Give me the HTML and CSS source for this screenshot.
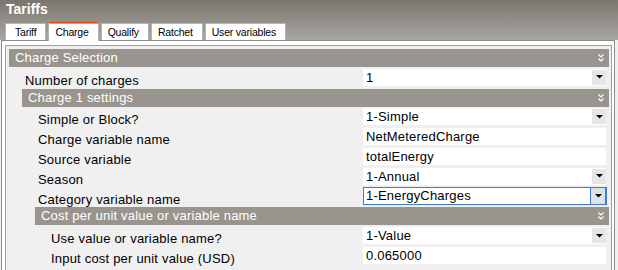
FILE: index.html
```html
<!DOCTYPE html>
<html lang="en">
<head>
  <meta charset="UTF-8">
  <title>Tariffs</title>
  <link rel="stylesheet" href="styles.css">
</head>
<body>
  <div class="window">
    <div class="title">Tariffs</div>

    <div class="tabs">
      <div class="tab">Tariff</div>
      <div class="tab active">Charge</div>
      <div class="tab">Qualify</div>
      <div class="tab">Ratchet</div>
      <div class="tab">User variables</div>
    </div>

    <div class="page">
      <div class="grid">
        <div class="row">
          <div class="head lv0"><span>Charge Selection</span><svg class="chev" width="6" height="8" viewBox="0 0 6 8"><path d="M0.5 0.5 L3 3 L5.5 0.5 M0.5 4.5 L3 7 L5.5 4.5"/></svg></div>
        </div>
        <div class="row">
          <div class="label lv0">Number of charges</div>
          <div class="value"><span class="text">1</span><span class="drop"><svg width="7" height="4" viewBox="0 0 7 4"><polygon points="0,0 7,0 3.5,3.5"/></svg></span></div>
        </div>
        <div class="row">
          <div class="head lv1"><span>Charge 1 settings</span><svg class="chev" width="6" height="8" viewBox="0 0 6 8"><path d="M0.5 0.5 L3 3 L5.5 0.5 M0.5 4.5 L3 7 L5.5 4.5"/></svg></div>
        </div>
        <div class="row">
          <div class="label lv1">Simple or Block?</div>
          <div class="value"><span class="text">1-Simple</span><span class="drop"><svg width="7" height="4" viewBox="0 0 7 4"><polygon points="0,0 7,0 3.5,3.5"/></svg></span></div>
        </div>
        <div class="row">
          <div class="label lv1">Charge variable name</div>
          <div class="value"><span class="text">NetMeteredCharge</span></div>
        </div>
        <div class="row">
          <div class="label lv1">Source variable</div>
          <div class="value"><span class="text">totalEnergy</span></div>
        </div>
        <div class="row">
          <div class="label lv1">Season</div>
          <div class="value"><span class="text">1-Annual</span><span class="drop"><svg width="7" height="4" viewBox="0 0 7 4"><polygon points="0,0 7,0 3.5,3.5"/></svg></span></div>
        </div>
        <div class="row">
          <div class="label lv1">Category variable name</div>
          <div class="value focus"><span class="text">1-EnergyCharges</span><span class="drop"><svg width="7" height="4" viewBox="0 0 7 4"><polygon points="0,0 7,0 3.5,3.5"/></svg></span></div>
        </div>
        <div class="row">
          <div class="head lv2"><span>Cost per unit value or variable name</span><svg class="chev" width="6" height="8" viewBox="0 0 6 8"><path d="M0.5 0.5 L3 3 L5.5 0.5 M0.5 4.5 L3 7 L5.5 4.5"/></svg></div>
        </div>
        <div class="row">
          <div class="label lv2">Use value or variable name?</div>
          <div class="value"><span class="text">1-Value</span><span class="drop"><svg width="7" height="4" viewBox="0 0 7 4"><polygon points="0,0 7,0 3.5,3.5"/></svg></span></div>
        </div>
        <div class="row">
          <div class="label lv2">Input cost per unit value (USD)</div>
          <div class="value"><span class="text">0.065000</span></div>
        </div>
      </div>
    </div>
  </div>
</body>
</html>
```

FILE: styles.css
```css
/* tariff editor window */
body {
  margin: 0;
  font-family: "Liberation Sans", Arial, sans-serif;
  font-size: 13px;
  color: #000;
  background-color: #f0f0f0;
}

.window {
  width: 618px;
  height: 270px;
  overflow: hidden;
  background: linear-gradient(to bottom, #7a756d 0, #a8a6a2 40px, #f0f0f0 40px);
}

.title {
  box-sizing: border-box;
  height: 22px;
  padding: 1px 0 0 6px;
  line-height: 17px;
  font-size: 14px;
  font-weight: bold;
  color: #fff;
}

/* tabs */
.tabs {
  position: relative;
  z-index: 1;
  display: flex;
  align-items: flex-start;
  gap: 2px;
  height: 19px;
  margin-bottom: -1px;
  padding-left: 5px;
}

.tab {
  box-sizing: border-box;
  height: 17px;
  margin-top: 1px;
  padding: 1px 9px 0 6px;
  background-color: #fff;
  border: 1px solid #b4b4b4;
  border-bottom: none;
  font-size: 10.5px;
  letter-spacing: -0.2px;
  line-height: 15px;
}

.tab:first-child {
  padding-left: 9px;
}

.tab.active {
  height: 19px;
  margin-top: 0;
  padding-top: 2px;
  border-top: 1px solid #e4441a;
  box-shadow: inset 0 1px 0 #f6a11f;
}

/* tab page and property grid */
.page {
  width: 614px;
  box-sizing: border-box;
  height: 240px;
  margin-left: 1px;
  padding: 4px 2px 0 3px;
  background-color: #fff;
  border: 1px solid #8c8c8c;
}

.grid {
  height: 100%;
  box-sizing: border-box;
  padding: 3px 2px 0 3px;
  background-color: #f0f0f0;
  border: 1px solid #a0a0a0;
  letter-spacing: 0.2px;
}

.row {
  display: grid;
  grid-template-columns: 1fr 243px;
  height: 19.8px;
  padding-right: 3px;
}

.head {
  grid-column: 1 / 3;
  display: flex;
  align-items: center;
  justify-content: space-between;
  height: 18px;
  margin-right: -3px;
  padding: 0 5px 0 6px;
  line-height: 18px;
  background-color: #99948d;
  color: #fff;
}

.head.lv1 { margin-left: 13px; }
.head.lv2 { margin-left: 26px; }

.chev {
  fill: none;
  stroke: #fff;
  stroke-width: 1.2;
}

.label {
  padding-top: 3px;
  line-height: 17px;
  white-space: nowrap;
}

.label.lv0 { padding-left: 16px; }
.label.lv1 { padding-left: 29px; }
.label.lv2 { padding-left: 42px; }

.value {
  display: flex;
  box-sizing: border-box;
  height: 17px;
  background-color: #fff;
}

.value .text {
  flex: 1;
  padding-left: 3px;
  line-height: 17px;
}

.drop {
  display: flex;
  align-items: center;
  justify-content: center;
  width: 14px;
  height: 15px;
  margin-top: 1px;
  background-color: #e6e6e6;
}

.drop svg {
  fill: #000;
}

.value.focus {
  height: 18px;
  margin-top: -1px;
  border: 1px solid #3d7bd0;
  border-right-width: 2px;
  margin-right: -1px;
}

.value.focus .text {
  padding-left: 2px;
  line-height: 16px;
}

.value.focus .drop {
  height: 16px;
  margin-top: 0;
  border-left: 1px solid #3d7bd0;
  background-color: #dbe2ea;
}
```
